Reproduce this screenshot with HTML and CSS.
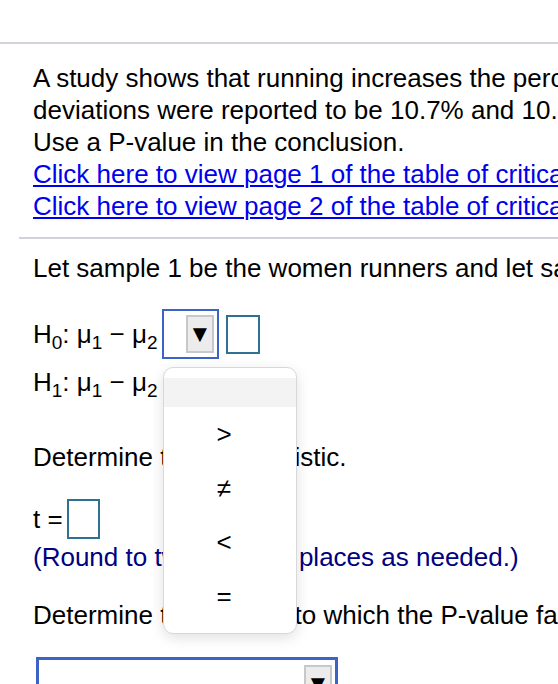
FILE: index.html
```html
<!DOCTYPE html>
<html>
<head>
<meta charset="utf-8">
<link rel="stylesheet" href="styles.css">
</head>
<body>
<div class="page">
  <div class="topbar"></div>
  <div class="intro">
    <div class="line">A study shows that running increases the percent of resting metabolic rate (RMR) in older women.</div>
    <div class="line">deviations were reported to be 10.7% and 10.3%, respectively. Use a significance level of 0.05.</div>
    <div class="line">Use a P-value in the conclusion.</div>
    <div class="line"><a href="#" class="link">Click here to view page 1 of the table of critical values of the t-distribution.</a></div>
    <div class="line"><a href="#" class="link">Click here to view page 2 of the table of critical values of the t-distribution.</a></div>
  </div>
  <div class="sep"></div>
  <div class="body">
    <div class="line">Let sample 1 be the women runners and let sample 2 be the women who do not run.</div>
    <div class="hyp h0">
      <span class="hlabel">H<sub>0</sub>: μ<sub>1</sub> − μ<sub>2</sub></span>
      <span class="select small"><span class="btn">▼</span></span>
      <span class="box"></span>
    </div>
    <div class="hyp h1">
      <span class="hlabel">H<sub>1</sub>: μ<sub>1</sub> − μ<sub>2</sub></span>
    </div>
    <div class="line det1">Determine the test statistic.</div>
    <div class="tline"><span>t =</span><span class="box tbox"></span></div>
    <div class="line hint">(Round to two decimal places as needed.)</div>
    <div class="line det2">Determine the interval to which the P-value falls.</div>
    <div class="select wide"><span class="btn">▼</span></div>
  </div>
  <div class="menu">
    <div class="opt blank"></div>
    <div class="opt">&gt;</div>
    <div class="opt">≠</div>
    <div class="opt">&lt;</div>
    <div class="opt">=</div>
  </div>
</div>
</body>
</html>
```
FILE: styles.css
```css
html, body {
  margin: 0;
  padding: 0;
  background: #fff;
}
.page {
  position: relative;
  width: 558px;
  height: 684px;
  overflow: hidden;
  font-family: "Liberation Sans", Arial, sans-serif;
  font-size: 26px;
  color: #000;
  white-space: nowrap;
}
.topbar {
  height: 42px;
  border-bottom: 2px solid #d0d3de;
}
.intro {
  padding: 18px 0 0 33px;
}
.line {
  line-height: 32px;
  height: 32px;
}
.link {
  color: #0000ee;
  text-decoration: underline;
  text-decoration-thickness: 2px;
  text-underline-offset: 2px;
}
.sep {
  margin: 15px 0 0 19px;
  border-top: 2px solid #d0d3de;
}
.body {
  padding: 13px 0 0 33px;
}
.hyp {
  display: flex;
  align-items: center;
  height: 58px;
}
.h0 {
  margin-top: 21px;
}
.hlabel {
  width: 129px;
}
.hlabel sub {
  font-size: 19px;
  vertical-align: -6px;
  line-height: 0;
}
.select {
  display: flex;
  justify-content: flex-end;
  align-items: center;
  box-sizing: border-box;
  border: 2px solid #3d63c9;
  background: #fff;
}
.select.small {
  width: 57px;
  height: 50px;
  padding-right: 3px;
}
.btn {
  box-sizing: border-box;
  width: 28px;
  height: 38px;
  background: #ececec;
  border: 2px solid #c8c8c8;
  font-size: 24px;
  line-height: 34px;
  text-align: center;
  color: #000;
}
.box {
  display: inline-block;
  box-sizing: border-box;
  width: 34px;
  height: 39px;
  border: 2px solid #2e7191;
  margin-left: 7px;
}
.h1 {
  margin-top: -1px;
  height: 40px;
}
.det1 {
  margin-top: 39px;
}
.tline {
  display: flex;
  align-items: center;
  margin-top: 26px;
  height: 40px;
}
.tline span:first-child {
  margin-right: 4px;
}
.tbox {
  width: 33px;
  height: 40px;
  margin-left: 0;
}
.hint {
  color: #000080;
  margin-top: 2px;
}
.det2 {
  margin-top: 26px;
}
.select.wide {
  margin: 26px 0 0 3px;
  width: 302px;
  height: 50px;
  align-items: flex-start;
  padding: 5px 3px 0 0;
  border-width: 3px;
}
.menu {
  position: absolute;
  left: 163px;
  top: 367px;
  width: 134px;
  height: 267px;
  box-sizing: border-box;
  border: 1px solid #d8d8d8;
  border-radius: 10px;
  background: #fff;
  box-shadow: 0 4px 14px rgba(0, 0, 0, 0.12);
  padding-top: 12px;
  font-size: 26px;
}
.opt {
  height: 54px;
  line-height: 54px;
  text-align: center;
  padding-right: 12px;
}
.opt.blank {
  height: 29px;
  background: #f3f3f3;
  margin-bottom: 0;
  margin-top: -2px;
}
```
